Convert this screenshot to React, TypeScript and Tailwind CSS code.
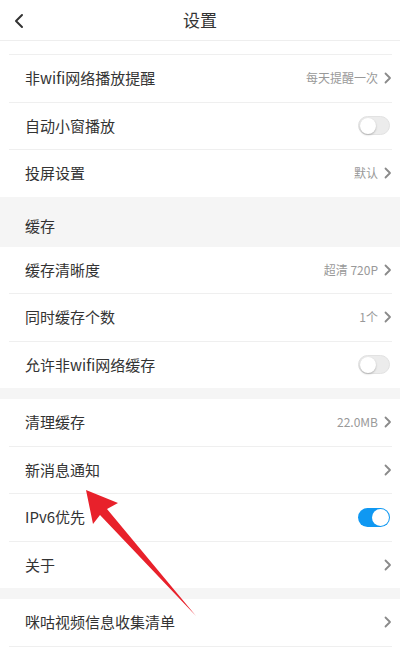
import React from "react";

// Chevron used at the end of navigable rows
function Chevron() {
  return (
    <svg width="8" height="12" viewBox="0 0 8 12" className="ml-[6px] shrink-0">
      <polyline points="1.5,1.5 6,6 1.5,10.5" fill="none" stroke="#8a8a8a" strokeWidth="1.8" strokeLinecap="round" strokeLinejoin="round" />
    </svg>
  );
}

function Toggle({ on = false }: { on?: boolean }) {
  return on ? (
    <div className="w-[32px] h-[19px] rounded-full bg-[#0f98f2] flex items-center justify-end pr-[1px]">
      <div className="w-[17px] h-[17px] rounded-full bg-white" />
    </div>
  ) : (
    <div className="w-[32px] h-[19px] rounded-full bg-[#ececec] border border-[#e2e2e2] flex items-center pl-[0.5px]">
      <div className="w-[16px] h-[16px] rounded-full bg-white shadow-[0_1px_2px_rgba(0,0,0,0.25)]" />
    </div>
  );
}

function Divider() {
  return <div className="h-px bg-[#efefef] ml-[9px] mr-[8px]" />;
}

interface RowProps {
  label: string;
  value?: string;
  arrow?: boolean;
  toggle?: "on" | "off";
}

function Row({ label, value, arrow, toggle }: RowProps) {
  return (
    <div className="h-[46.5px] flex items-center pl-[25px] pr-[8px] bg-white">
      <span className="text-[15px] text-[#333333] flex-1">{label}</span>
      {value && <span className="text-[12px] text-[#999999]">{value}</span>}
      {arrow && <Chevron />}
      {toggle && (
        <div className="mr-[2px]">
          <Toggle on={toggle === "on"} />
        </div>
      )}
    </div>
  );
}

function Group({ rows, last }: { rows: RowProps[]; last?: boolean }) {
  return (
    <div className="bg-white">
      {rows.map((r, i) => (
        <div key={r.label}>
          {i > 0 && <Divider />}
          <Row {...r} />
        </div>
      ))}
      {last && <Divider />}
    </div>
  );
}

export default function App() {
  return (
    <div className="relative w-[400px] h-[657px] overflow-hidden bg-white font-['Noto_Sans_CJK_SC','Noto_Sans',sans-serif]">
      {/* Header */}
      <div className="h-[41px] flex items-center justify-center relative border-b border-[#eeeeee]">
        <svg width="12" height="16" viewBox="0 0 12 16" className="absolute left-[13px] top-[13px]">
          <polyline points="9,2 3,8 9,14" fill="none" stroke="#333333" strokeWidth="2" strokeLinecap="round" strokeLinejoin="round" />
        </svg>
        <span className="text-[17px] text-[#333333]">设置</span>
      </div>

      <div className="h-[13px] bg-white" />
      <Divider />

      <Group
        rows={[
          { label: "非wifi网络播放提醒", value: "每天提醒一次", arrow: true },
          { label: "自动小窗播放", toggle: "off" },
          { label: "投屏设置", value: "默认", arrow: true },
        ]}
      />

      <div className="h-[50px] bg-[#f5f5f5] flex items-center pl-[25px] pt-[9px]">
        <span className="text-[15px] text-[#333333]">缓存</span>
      </div>

      <Group
        rows={[
          { label: "缓存清晰度", value: "超清 720P", arrow: true },
          { label: "同时缓存个数", value: "1个", arrow: true },
          { label: "允许非wifi网络缓存", toggle: "off" },
        ]}
      />

      <div className="h-[11px] bg-[#f5f5f5]" />

      <Group
        rows={[
          { label: "清理缓存", value: "22.0MB", arrow: true },
          { label: "新消息通知", arrow: true },
          { label: "IPv6优先", toggle: "on" },
          { label: "关于", arrow: true },
        ]}
      />

      <div className="h-[11px] bg-[#f5f5f5]" />

      <Group rows={[{ label: "咪咕视频信息收集清单", arrow: true }]} last />

      {/* Red annotation arrow */}
      <svg width="400" height="657" viewBox="0 0 400 657" className="absolute inset-0 pointer-events-none">
        <polygon
          points="86,490 118,503 107,509 196,616 100,515 93,524"
          fill="#e8212b"
        />
      </svg>
    </div>
  );
}
